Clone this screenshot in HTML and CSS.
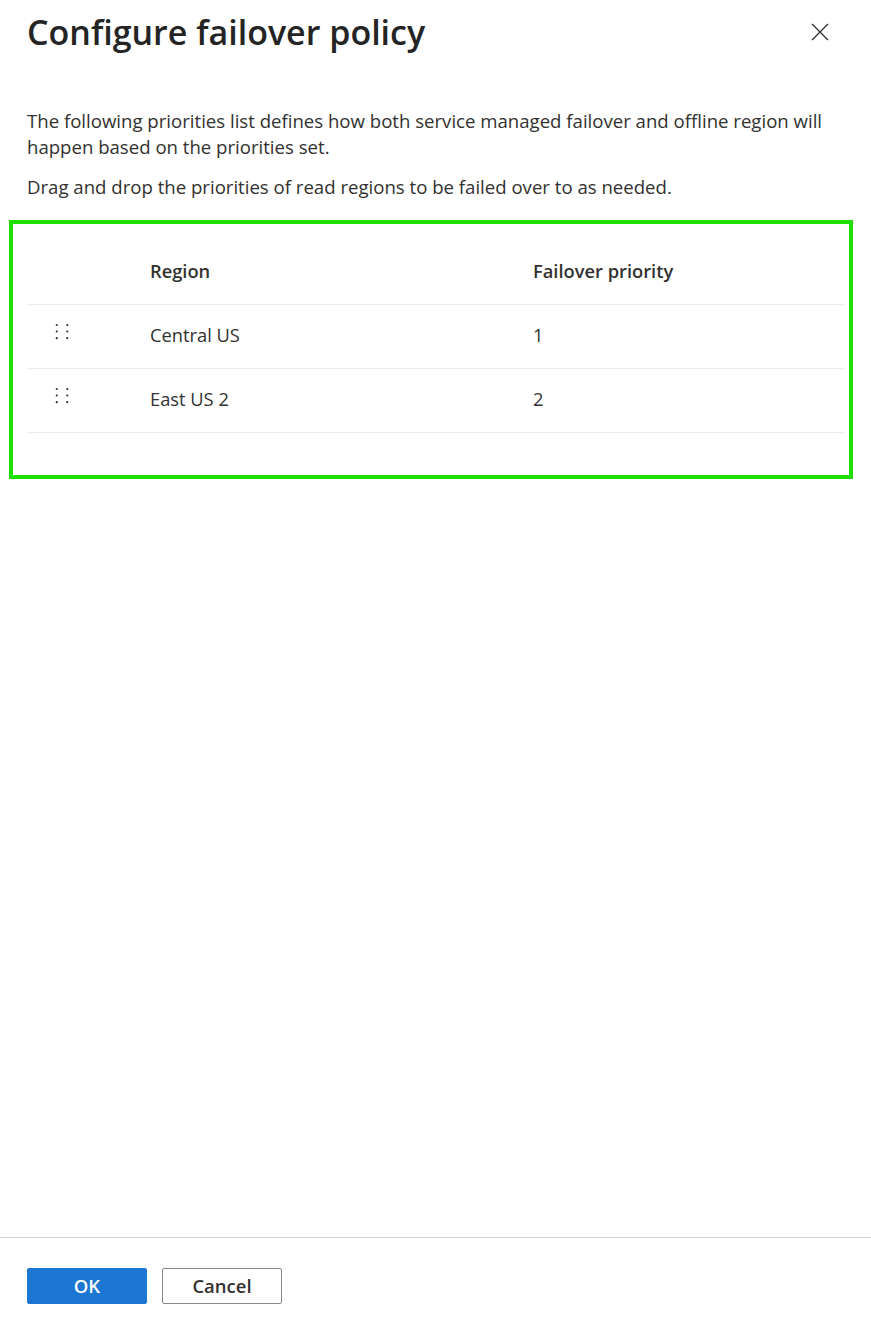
FILE: index.html
```html
<!DOCTYPE html>
<html lang="en">
<head>
<meta charset="utf-8">
<title>Configure failover policy</title>
<link rel="stylesheet" href="styles.css">
</head>
<body>
<div class="panel">
  <header class="panel-header">
    <h1 class="panel-title">Configure failover policy</h1>
    <button class="close-btn" aria-label="Close">
      <svg width="18" height="18" viewBox="0 0 18 18"><path d="M1 1L17 17M17 1L1 17" stroke="#323130" stroke-width="1.3" fill="none"/></svg>
    </button>
  </header>

  <main class="panel-body">
    <p class="desc">The following priorities list defines how both service managed failover and offline region will happen based on the priorities set.</p>
    <p class="desc desc-second">Drag and drop the priorities of read regions to be failed over to as needed.</p>

    <section class="priority-box">
      <div class="grid-row grid-head">
        <div class="cell cell-handle"></div>
        <div class="cell cell-region">Region</div>
        <div class="cell cell-priority">Failover priority</div>
      </div>
      <div class="grid-row">
        <div class="cell cell-handle">
          <svg class="grip" width="16" height="20" viewBox="0 0 16 20"><g fill="#3b2a22"><circle cx="2" cy="2" r="1.2"/><circle cx="2" cy="9.5" r="1.2"/><circle cx="2" cy="17" r="1.2"/><circle cx="14" cy="2" r="1.2"/><circle cx="14" cy="9.5" r="1.2"/><circle cx="14" cy="17" r="1.2"/></g></svg>
        </div>
        <div class="cell cell-region">Central US</div>
        <div class="cell cell-priority">1</div>
      </div>
      <div class="grid-row">
        <div class="cell cell-handle">
          <svg class="grip" width="16" height="20" viewBox="0 0 16 20"><g fill="#3b2a22"><circle cx="2" cy="2" r="1.2"/><circle cx="2" cy="9.5" r="1.2"/><circle cx="2" cy="17" r="1.2"/><circle cx="14" cy="2" r="1.2"/><circle cx="14" cy="9.5" r="1.2"/><circle cx="14" cy="17" r="1.2"/></g></svg>
        </div>
        <div class="cell cell-region">East US 2</div>
        <div class="cell cell-priority">2</div>
      </div>
    </section>
  </main>

  <footer class="panel-footer">
    <button class="btn btn-primary">OK</button>
    <button class="btn btn-default">Cancel</button>
  </footer>
</div>
</body>
</html>
```
FILE: styles.css
```css
* { box-sizing: border-box; }

html, body {
  margin: 0;
  padding: 0;
  background: #ffffff;
}

body {
  font-family: "Open Sans", "Noto Sans", "Liberation Sans", sans-serif;
  color: #323130;
}

.panel {
  display: flex;
  flex-direction: column;
  min-height: 100vh;
}

.panel-header {
  display: flex;
  align-items: flex-start;
  justify-content: space-between;
  padding: 10px 42px 0 27px;
}

.panel-title {
  margin: 0;
  font-size: 34px;
  font-weight: 600;
  line-height: 44px;
  color: #242424;
}

.close-btn {
  margin-top: 13px;
  padding: 0;
  border: 0;
  background: none;
  width: 18px;
  height: 18px;
  display: flex;
}

.panel-body {
  flex: 1;
  padding: 54px 18px 0 9px;
}

.desc {
  margin: 0 0 0 18px;
  font-size: 18.6px;
  line-height: 26px;
}

.desc-second {
  margin-top: 14px;
}

/* highlighted region-priority list */
.priority-box {
  margin-top: 20px;
  border: 4px solid #20e000;
  padding: 17px 4px 42px 14px;
}

.grid-row {
  display: grid;
  grid-template-columns: 100px 383px 1fr;
  height: 64px;
  align-items: center;
  border-bottom: 1px solid #ececec;
}

.cell {
  font-size: 18.3px;
  padding-left: 23px;
  padding-bottom: 4px;
}

.grid-head .cell {
  font-weight: 600;
  color: #323130;
}

.cell-handle {
  padding-left: 28px;
  padding-bottom: 0;
  align-self: start;
  padding-top: 18px;
}

.grip { display: block; width: 14px; height: 18px; }

.panel-footer {
  border-top: 1px solid #d4d4d4;
  padding: 30px 27px 26px;
  display: flex;
  gap: 15px;
}

.btn {
  width: 120px;
  height: 36px;
  border-radius: 2px;
  font-family: inherit;
  font-size: 18.5px;
  font-weight: 600;
  padding: 0 0 2px;
}

.btn-primary {
  background: #1b77d2;
  border: 1px solid #1b77d2;
  color: #ffffff;
}

.btn-default {
  background: #ffffff;
  border: 1px solid #8a8886;
  color: #323130;
}
```
